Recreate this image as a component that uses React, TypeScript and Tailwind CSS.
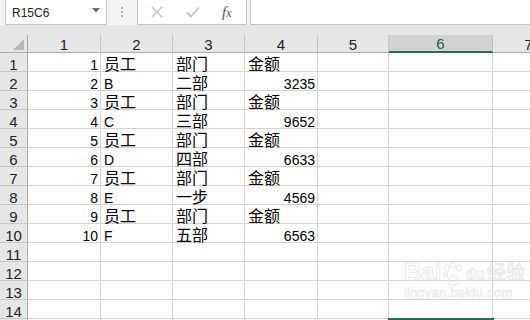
import React from 'react';

const rows: string[][] = [
    ['1', '员工', '部门', '金额'],
    ['2', 'B', '二部', '3235'],
    ['3', '员工', '部门', '金额'],
    ['4', 'C', '三部', '9652'],
    ['5', '员工', '部门', '金额'],
    ['6', 'D', '四部', '6633'],
    ['7', '员工', '部门', '金额'],
    ['8', 'E', '一步', '4569'],
    ['9', '员工', '部门', '金额'],
    ['10', 'F', '五部', '6563'],
];

const isNum = (s: string) => /^\d+$/.test(s);
const isCjk = (s: string) => /[\u4e00-\u9fff]/.test(s);

const Cell: React.FC<{ value?: string }> = ({ value = '' }) => (
    <div
        className={`h-[19px] border-r border-b border-[#d4d4d4] flex items-end overflow-visible whitespace-nowrap leading-[12px] text-black ${
            isNum(value) ? 'justify-end pr-[2px]' : 'pl-[3px]'
        } ${isCjk(value) ? 'text-[16px]' : 'text-[14px]'}`}
    >
        {value}
    </div>
);

const Watermark = () => (
    <div className="absolute left-[404px] top-[260px] pointer-events-none select-none opacity-60">
        <div className="flex items-end gap-[2px]">
            <span className="text-[24px] font-bold leading-[24px] text-white [-webkit-text-stroke:1px_#dcdcdc]">Bai</span>
            <svg width="20" height="24" viewBox="0 0 20 24" className="-mb-[2px]">
                <g fill="none" stroke="#dcdcdc" strokeWidth="1.2">
                    <ellipse cx="4" cy="6" rx="2.4" ry="3" />
                    <ellipse cx="10" cy="3.5" rx="2.4" ry="3" />
                    <ellipse cx="16" cy="6" rx="2.4" ry="3" />
                    <ellipse cx="2.5" cy="12.5" rx="2" ry="2.6" />
                    <path d="M5 21c0-5 3-8 5-8s5 3 5 8c0 2-2 2-5 2s-5 0-5-2z" />
                </g>
            </svg>
            <span className="text-[16px] font-bold leading-[18px] text-white [-webkit-text-stroke:1px_#dcdcdc]">du</span>
            <span className="text-[19px] leading-[22px] text-white [-webkit-text-stroke:1px_#dcdcdc]">经验</span>
        </div>
        <div className="text-[13px] leading-[14px] mt-[2px] text-white [-webkit-text-stroke:0.8px_#e0e0e0] tracking-[0.2px]">jingyan.baidu.com</div>
    </div>
);

export default function App() {
    const cols = ['1', '2', '3', '4', '5', '6', '7'];
    const body: string[][] = [];
    for (let i = 0; i < 14; i++) body.push(rows[i] || []);

    return (
        <div className="relative w-[530px] h-[320px] overflow-hidden bg-white font-['Liberation_Sans','Noto_Sans_CJK_SC',sans-serif]">
            {/* formula bar */}
            <div className="h-[25px] bg-[#f3f3f3] flex items-stretch">
                <div className="ml-[5px] w-[102px] shrink-0 bg-white border-x border-b border-[#c6c6c6] flex items-center justify-between pl-[6px] pr-[6px]">
                    <span className="text-[12px] text-[#222] leading-none mt-[1px]">R15C6</span>
                    <svg width="8" height="5" viewBox="0 0 8 5" className="-mt-[3px]">
                        <path d="M0 0h8L4 4.5z" fill="#707070" />
                    </svg>
                </div>
                <div className="w-[30px] shrink-0 flex flex-col items-center justify-center gap-[2px] pb-[1px]">
                    <span className="w-[2px] h-[2px] bg-[#b0b0b0]" />
                    <span className="w-[2px] h-[2px] bg-[#b0b0b0]" />
                    <span className="w-[2px] h-[2px] bg-[#b0b0b0]" />
                </div>
                <div className="w-[110px] shrink-0 bg-white border-x border-b border-[#c6c6c6] flex items-center pl-[13px]">
                    <svg width="12" height="12" viewBox="0 0 12 12">
                        <path d="M1 1l10 10M11 1L1 11" stroke="#c3c3c3" strokeWidth="1.4" />
                    </svg>
                    <svg width="14" height="12" viewBox="0 0 14 12" className="ml-[23px]">
                        <path d="M1 6.5l4 4L13 1.5" fill="none" stroke="#c3c3c3" strokeWidth="1.8" />
                    </svg>
                    <span className="ml-[22px] text-[15px] italic text-[#555] font-['Liberation_Serif',serif] leading-none">
                        f<span className="text-[12px]">x</span>
                    </span>
                </div>
                <div className="ml-[3px] flex-1 bg-white border-l border-b border-[#c6c6c6]" />
            </div>
            <div className="h-[10px] bg-[#e6e6e6]" />

            {/* sheet */}
            <div className="grid w-[565px] grid-cols-[28px_73px_72px_72px_73px_71px_104px_72px]">
                {/* column headers */}
                <div className="h-[18px] bg-[#e6e6e6] border-r border-b border-[#ababab] flex items-end justify-end pr-[3px] pb-[2px]">
                    <svg width="11" height="11" viewBox="0 0 11 11">
                        <path d="M11 0v11H0z" fill="#b8b8b8" />
                    </svg>
                </div>
                {cols.map(c =>
                    c === '6' ? (
                        <div
                            key={c}
                            className="h-[18px] bg-[#d2d2d2] border-r border-[#bdbdbd] border-b-2 border-b-[#217346] flex items-center justify-center text-[15px] leading-none text-[#1f5f3e] pt-[1px]"
                        >
                            {c}
                        </div>
                    ) : (
                        <div
                            key={c}
                            className="h-[18px] bg-[#e6e6e6] border-r border-b border-r-[#c6c6c6] border-b-[#ababab] flex items-center justify-center text-[15px] leading-none text-[#222] pt-[2px]"
                        >
                            {c}
                        </div>
                    )
                )}

                {body.map((r, i) => (
                    <React.Fragment key={i}>
                        <div className="h-[19px] bg-[#e6e6e6] border-r border-b border-r-[#ababab] border-b-[#c6c6c6] flex items-end justify-center text-[15px] leading-[12px] text-[#222]">
                            {i + 1}
                        </div>
                        <Cell value={r[0]} />
                        <Cell value={r[1]} />
                        <Cell value={r[2]} />
                        <Cell value={r[3]} />
                        <Cell />
                        <Cell />
                        <Cell />
                    </React.Fragment>
                ))}

                {/* row 15, selected cell R15C6 */}
                <div className="h-[19px] bg-[#e6e6e6] border-r border-[#ababab]" />
                <div className="h-[19px]" />
                <div className="h-[19px]" />
                <div className="h-[19px]" />
                <div className="h-[19px]" />
                <div className="h-[19px]" />
                <div className="h-[19px] relative">
                    <div className="absolute -top-[1px] -left-[1px] -right-[1px] h-[2px] bg-[#217346]" />
                </div>
                <div className="h-[19px]" />
            </div>

            <Watermark />
        </div>
    );
}
